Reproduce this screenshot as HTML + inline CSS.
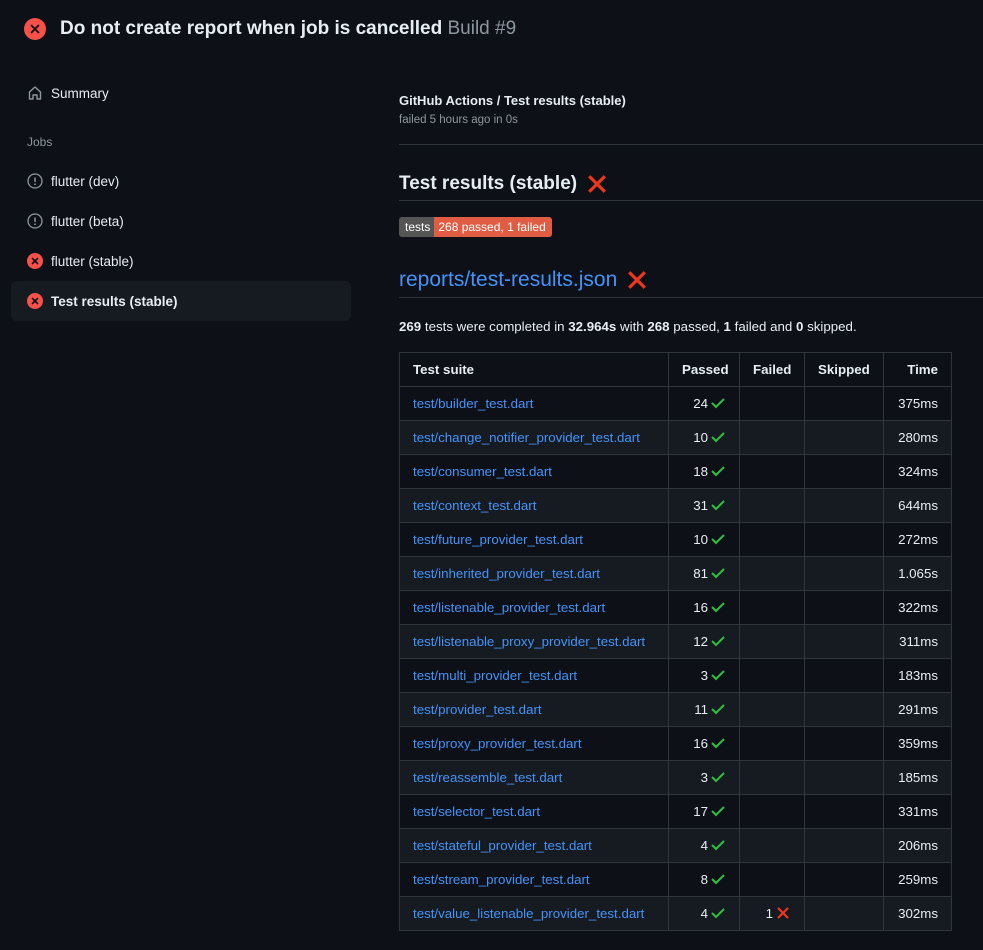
<!DOCTYPE html>
<html><head><meta charset="utf-8"><style>
*{box-sizing:border-box;margin:0;padding:0}
body{width:983px;height:950px;background:#0d1117;color:#e6edf3;font-family:"Liberation Sans",sans-serif;font-size:14px;position:relative;overflow:hidden}
.abs{position:absolute}
.title{left:24px;top:18px;font-size:19px;font-weight:600;display:flex;align-items:center;gap:14px;white-space:nowrap}
.title .b{color:#8d96a0;font-weight:400}
.xc{width:22px;height:22px;border-radius:50%;background:#f85149;display:flex;align-items:center;justify-content:center}
.side{left:11px;width:340px}
.item{height:40px;display:flex;align-items:center;padding-left:16px;gap:8px;font-size:13.5px;color:#e6edf3;border-radius:6px}
.sel{background:#161b22;font-weight:600}
.sx{width:16px;height:16px;border-radius:50%;background:#f85149;display:flex;align-items:center;justify-content:center}
a{color:#4493f8;text-decoration:none}
table{border-collapse:collapse;position:absolute;left:399px;top:352px;width:553px;table-layout:fixed}
td,th{border:1px solid #30363d;height:34px;padding:0 13px;font-size:13.3px;white-space:nowrap;overflow:hidden}
th{text-align:left;font-weight:600}
tr:nth-child(odd) td{background:#161b22}
.r{text-align:right}
.ck{display:inline-block;vertical-align:-2px;margin-left:2px}
</style></head><body>
<div class="abs title"><div class="xc"><svg width="10" height="10" viewBox="0 0 10 10"><path d="M1.5 1.5l7 7M8.5 1.5l-7 7" stroke="#0d1117" stroke-width="1.8" stroke-linecap="round"/></svg></div><span>Do not create report when job is cancelled <span class="b">Build #9</span></span></div>
<div class="abs side" style="top:73px"><div class="item"><svg width="16" height="16" viewBox="0 0 16 16"><path d="M2.5 14V7L8 2l5.5 5v7H10V10H6v4z" fill="none" stroke="#8d96a0" stroke-width="1.4" stroke-linejoin="round"/></svg>Summary</div></div>
<div class="abs" style="left:27px;top:135px;font-size:12px;color:#8d96a0">Jobs</div>
<div class="abs side" style="top:161px">
<div class="item"><svg width="16" height="16" viewBox="0 0 16 16"><circle cx="8" cy="8" r="7" fill="none" stroke="#8d96a0" stroke-width="1.3"/><path d="M8 4.5v4.5" stroke="#8d96a0" stroke-width="1.5"/><circle cx="8" cy="11.3" r="0.9" fill="#8d96a0"/></svg>flutter (dev)</div>
<div class="item"><svg width="16" height="16" viewBox="0 0 16 16"><circle cx="8" cy="8" r="7" fill="none" stroke="#8d96a0" stroke-width="1.3"/><path d="M8 4.5v4.5" stroke="#8d96a0" stroke-width="1.5"/><circle cx="8" cy="11.3" r="0.9" fill="#8d96a0"/></svg>flutter (beta)</div>
<div class="item"><div class="sx"><svg width="8" height="8" viewBox="0 0 8 8"><path d="M1 1l6 6M7 1L1 7" stroke="#0d1117" stroke-width="1.6"/></svg></div>flutter (stable)</div>
<div class="item sel"><div class="sx"><svg width="8" height="8" viewBox="0 0 8 8"><path d="M1 1l6 6M7 1L1 7" stroke="#0d1117" stroke-width="1.6"/></svg></div>Test results (stable)</div>
</div>
<div class="abs" style="left:399px;top:93px;font-weight:600;font-size:13px">GitHub Actions / Test results (stable)</div>
<div class="abs" style="left:399px;top:114px;font-size:11.5px;color:#8d96a0">failed 5 hours ago in 0s</div>
<div class="abs" style="left:399px;top:144px;width:584px;height:1px;background:#30363d"></div>
<div class="abs" style="left:399px;top:173px;font-size:19px;font-weight:600;display:flex;align-items:center;gap:10px">Test results (stable) <svg width="20" height="20" viewBox="0 0 18 18"><path d="M2 2l14 14M16 2L2 16" stroke="#f0361c" stroke-width="2.8"/></svg></div>
<div class="abs" style="left:399px;top:200px;width:584px;height:1px;background:#30363d"></div>
<div class="abs" style="left:399px;top:217px;height:20px;display:flex;font-size:12px;line-height:20px;color:#fff;border-radius:3px;overflow:hidden"><span style="background:#555;padding:0 4px 0 6px">tests</span><span style="background:#e05d44;padding:0 6px 0 4px">268 passed, 1 failed</span></div>
<div class="abs" style="left:399px;top:268px;font-size:21px;display:flex;align-items:center;gap:10px"><a>reports/test-results.json</a><svg width="20" height="20" viewBox="0 0 18 18"><path d="M2 2l14 14M16 2L2 16" stroke="#f0361c" stroke-width="2.8"/></svg></div>
<div class="abs" style="left:399px;top:297px;width:584px;height:1px;background:#30363d"></div>
<div class="abs" style="left:399px;top:319px;font-size:13.3px"><b>269</b> tests were completed in <b>32.964s</b> with <b>268</b> passed, <b>1</b> failed and <b>0</b> skipped.</div>
<table>
<colgroup><col style="width:269px"><col style="width:71px"><col style="width:65px"><col style="width:79px"><col style="width:68px"></colgroup>
<tr><th>Test suite</th><th class="r">Passed</th><th>Failed</th><th>Skipped</th><th class="r">Time</th></tr>
<tr><td><a>test/builder_test.dart</a></td><td class="r">24<svg class="ck" width="16" height="14" viewBox="0 0 16 14"><path d="M2 7l4 4 8-8" fill="none" stroke="#2fbf3f" stroke-width="2"/></svg></td><td></td><td></td><td class="r">375ms</td></tr>
<tr><td><a>test/change_notifier_provider_test.dart</a></td><td class="r">10<svg class="ck" width="16" height="14" viewBox="0 0 16 14"><path d="M2 7l4 4 8-8" fill="none" stroke="#2fbf3f" stroke-width="2"/></svg></td><td></td><td></td><td class="r">280ms</td></tr>
<tr><td><a>test/consumer_test.dart</a></td><td class="r">18<svg class="ck" width="16" height="14" viewBox="0 0 16 14"><path d="M2 7l4 4 8-8" fill="none" stroke="#2fbf3f" stroke-width="2"/></svg></td><td></td><td></td><td class="r">324ms</td></tr>
<tr><td><a>test/context_test.dart</a></td><td class="r">31<svg class="ck" width="16" height="14" viewBox="0 0 16 14"><path d="M2 7l4 4 8-8" fill="none" stroke="#2fbf3f" stroke-width="2"/></svg></td><td></td><td></td><td class="r">644ms</td></tr>
<tr><td><a>test/future_provider_test.dart</a></td><td class="r">10<svg class="ck" width="16" height="14" viewBox="0 0 16 14"><path d="M2 7l4 4 8-8" fill="none" stroke="#2fbf3f" stroke-width="2"/></svg></td><td></td><td></td><td class="r">272ms</td></tr>
<tr><td><a>test/inherited_provider_test.dart</a></td><td class="r">81<svg class="ck" width="16" height="14" viewBox="0 0 16 14"><path d="M2 7l4 4 8-8" fill="none" stroke="#2fbf3f" stroke-width="2"/></svg></td><td></td><td></td><td class="r">1.065s</td></tr>
<tr><td><a>test/listenable_provider_test.dart</a></td><td class="r">16<svg class="ck" width="16" height="14" viewBox="0 0 16 14"><path d="M2 7l4 4 8-8" fill="none" stroke="#2fbf3f" stroke-width="2"/></svg></td><td></td><td></td><td class="r">322ms</td></tr>
<tr><td><a>test/listenable_proxy_provider_test.dart</a></td><td class="r">12<svg class="ck" width="16" height="14" viewBox="0 0 16 14"><path d="M2 7l4 4 8-8" fill="none" stroke="#2fbf3f" stroke-width="2"/></svg></td><td></td><td></td><td class="r">311ms</td></tr>
<tr><td><a>test/multi_provider_test.dart</a></td><td class="r">3<svg class="ck" width="16" height="14" viewBox="0 0 16 14"><path d="M2 7l4 4 8-8" fill="none" stroke="#2fbf3f" stroke-width="2"/></svg></td><td></td><td></td><td class="r">183ms</td></tr>
<tr><td><a>test/provider_test.dart</a></td><td class="r">11<svg class="ck" width="16" height="14" viewBox="0 0 16 14"><path d="M2 7l4 4 8-8" fill="none" stroke="#2fbf3f" stroke-width="2"/></svg></td><td></td><td></td><td class="r">291ms</td></tr>
<tr><td><a>test/proxy_provider_test.dart</a></td><td class="r">16<svg class="ck" width="16" height="14" viewBox="0 0 16 14"><path d="M2 7l4 4 8-8" fill="none" stroke="#2fbf3f" stroke-width="2"/></svg></td><td></td><td></td><td class="r">359ms</td></tr>
<tr><td><a>test/reassemble_test.dart</a></td><td class="r">3<svg class="ck" width="16" height="14" viewBox="0 0 16 14"><path d="M2 7l4 4 8-8" fill="none" stroke="#2fbf3f" stroke-width="2"/></svg></td><td></td><td></td><td class="r">185ms</td></tr>
<tr><td><a>test/selector_test.dart</a></td><td class="r">17<svg class="ck" width="16" height="14" viewBox="0 0 16 14"><path d="M2 7l4 4 8-8" fill="none" stroke="#2fbf3f" stroke-width="2"/></svg></td><td></td><td></td><td class="r">331ms</td></tr>
<tr><td><a>test/stateful_provider_test.dart</a></td><td class="r">4<svg class="ck" width="16" height="14" viewBox="0 0 16 14"><path d="M2 7l4 4 8-8" fill="none" stroke="#2fbf3f" stroke-width="2"/></svg></td><td></td><td></td><td class="r">206ms</td></tr>
<tr><td><a>test/stream_provider_test.dart</a></td><td class="r">8<svg class="ck" width="16" height="14" viewBox="0 0 16 14"><path d="M2 7l4 4 8-8" fill="none" stroke="#2fbf3f" stroke-width="2"/></svg></td><td></td><td></td><td class="r">259ms</td></tr>
<tr><td><a>test/value_listenable_provider_test.dart</a></td><td class="r">4<svg class="ck" width="16" height="14" viewBox="0 0 16 14"><path d="M2 7l4 4 8-8" fill="none" stroke="#2fbf3f" stroke-width="2"/></svg></td><td class="r">1<svg class="ck" width="16" height="14" viewBox="0 0 16 14"><path d="M3 2l10 10M13 2L3 12" fill="none" stroke="#f0361c" stroke-width="2.2"/></svg></td><td></td><td class="r">302ms</td></tr>
</table>
</body></html>
